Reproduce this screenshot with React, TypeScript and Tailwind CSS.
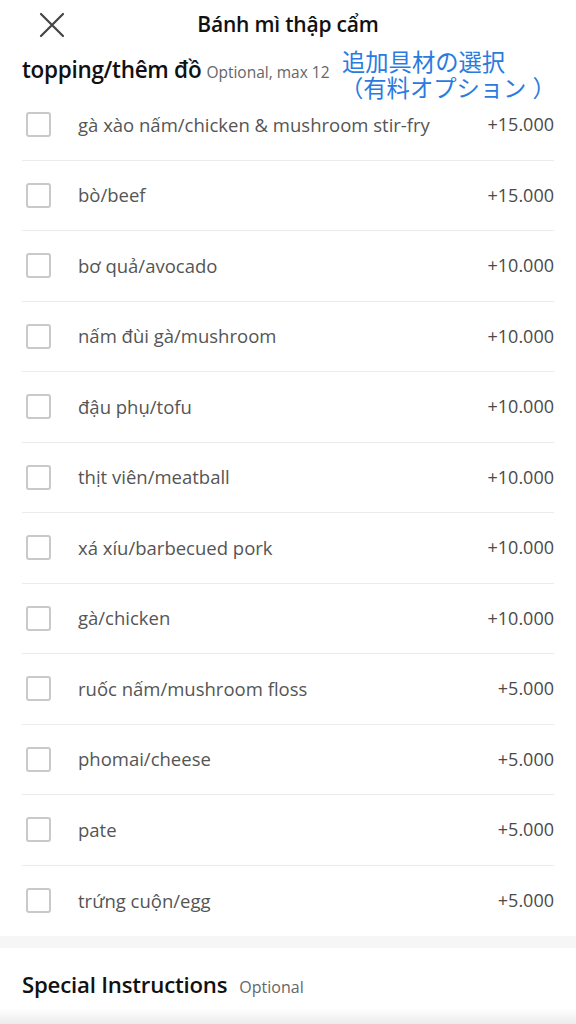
const toppings = [
  { name: "gà xào nấm/chicken & mushroom stir-fry", price: "+15.000" },
  { name: "bò/beef", price: "+15.000" },
  { name: "bơ quả/avocado", price: "+10.000" },
  { name: "nấm đùi gà/mushroom", price: "+10.000" },
  { name: "đậu phụ/tofu", price: "+10.000" },
  { name: "thịt viên/meatball", price: "+10.000" },
  { name: "xá xíu/barbecued pork", price: "+10.000" },
  { name: "gà/chicken", price: "+10.000" },
  { name: "ruốc nấm/mushroom floss", price: "+5.000" },
  { name: "phomai/cheese", price: "+5.000" },
  { name: "pate", price: "+5.000" },
  { name: "trứng cuộn/egg", price: "+5.000" },
];

const ToppingRow = ({ name, price, last }: { name: string; price: string; last: boolean }) => {
  return (
    <div
      className={`flex items-center h-[70.5px] ${last ? "" : "border-b border-[#ececec]"}`}
    >
      <div className="w-[25px] h-[25px] ml-[4px] border-[2.5px] border-[#c9c9c9] rounded-[3px] shrink-0" />
      <span className="ml-[27px] text-[18.5px] text-[#555555] flex-1 truncate">{name}</span>
      <span className="text-[18px] text-[#4a4a4a]">{price}</span>
    </div>
  );
};

const App = () => {
  return (
    <div
      className="relative w-[576px] h-[1024px] overflow-hidden bg-white"
      style={{ fontFamily: '"Open Sans", "Noto Sans", sans-serif' }}
    >
      {/* header */}
      <div className="relative h-12 flex items-center justify-center">
        <svg
          className="absolute left-[38px] top-[11px]"
          width="28"
          height="28"
          viewBox="0 0 28 28"
          fill="none"
          stroke="#444"
          strokeWidth="2.2"
          strokeLinecap="round"
        >
          <path d="M3 3 L25 25 M25 3 L3 25" />
        </svg>
        <h1 className="text-[21px] font-semibold text-[#111] tracking-[-0.2px] pt-[1px]">Bánh mì thập cẩm</h1>
      </div>

      <div className="px-[22px]">
        <div className="flex items-baseline h-[42px] pt-[5px]">
          <h2 className="text-[22.5px] font-semibold text-[#111] tracking-[-0.3px]">topping/thêm đồ</h2>
          <span className="ml-[5px] text-[15.5px] text-[#666]">Optional, max 12</span>
        </div>

        <div>
          {toppings.map((t, i) => (
            <ToppingRow key={t.name} name={t.name} price={t.price} last={i === toppings.length - 1} />
          ))}
        </div>
      </div>

      <div className="h-3 bg-[#f6f6f6]" />

      <div className="px-[22px] pt-[20px] flex items-baseline">
        <h2 className="text-[22.2px] font-semibold text-[#111] tracking-[-0.2px]">Special Instructions</h2>
        <span className="ml-[12px] text-[16px] text-[#666]">Optional</span>
      </div>

      <div className="absolute left-0 right-0 bottom-0 h-[16px] bg-gradient-to-b from-white to-[#ececec]" />

      {/* annotation overlay */}
      <div
        className="absolute left-[332px] top-[48px] text-[23.3px] text-[#2a7be0]"
        style={{ fontFamily: '"Noto Sans CJK JP", sans-serif' }}
      >
        <div className="pl-[10px] h-[26px] leading-[26px]">追加具材の選択</div>
        <div className="pl-[8px] h-[26px] leading-[26px]">
          （有料オプション<span className="ml-[6px]">）</span>
        </div>
      </div>
    </div>
  );
};

export default App;
